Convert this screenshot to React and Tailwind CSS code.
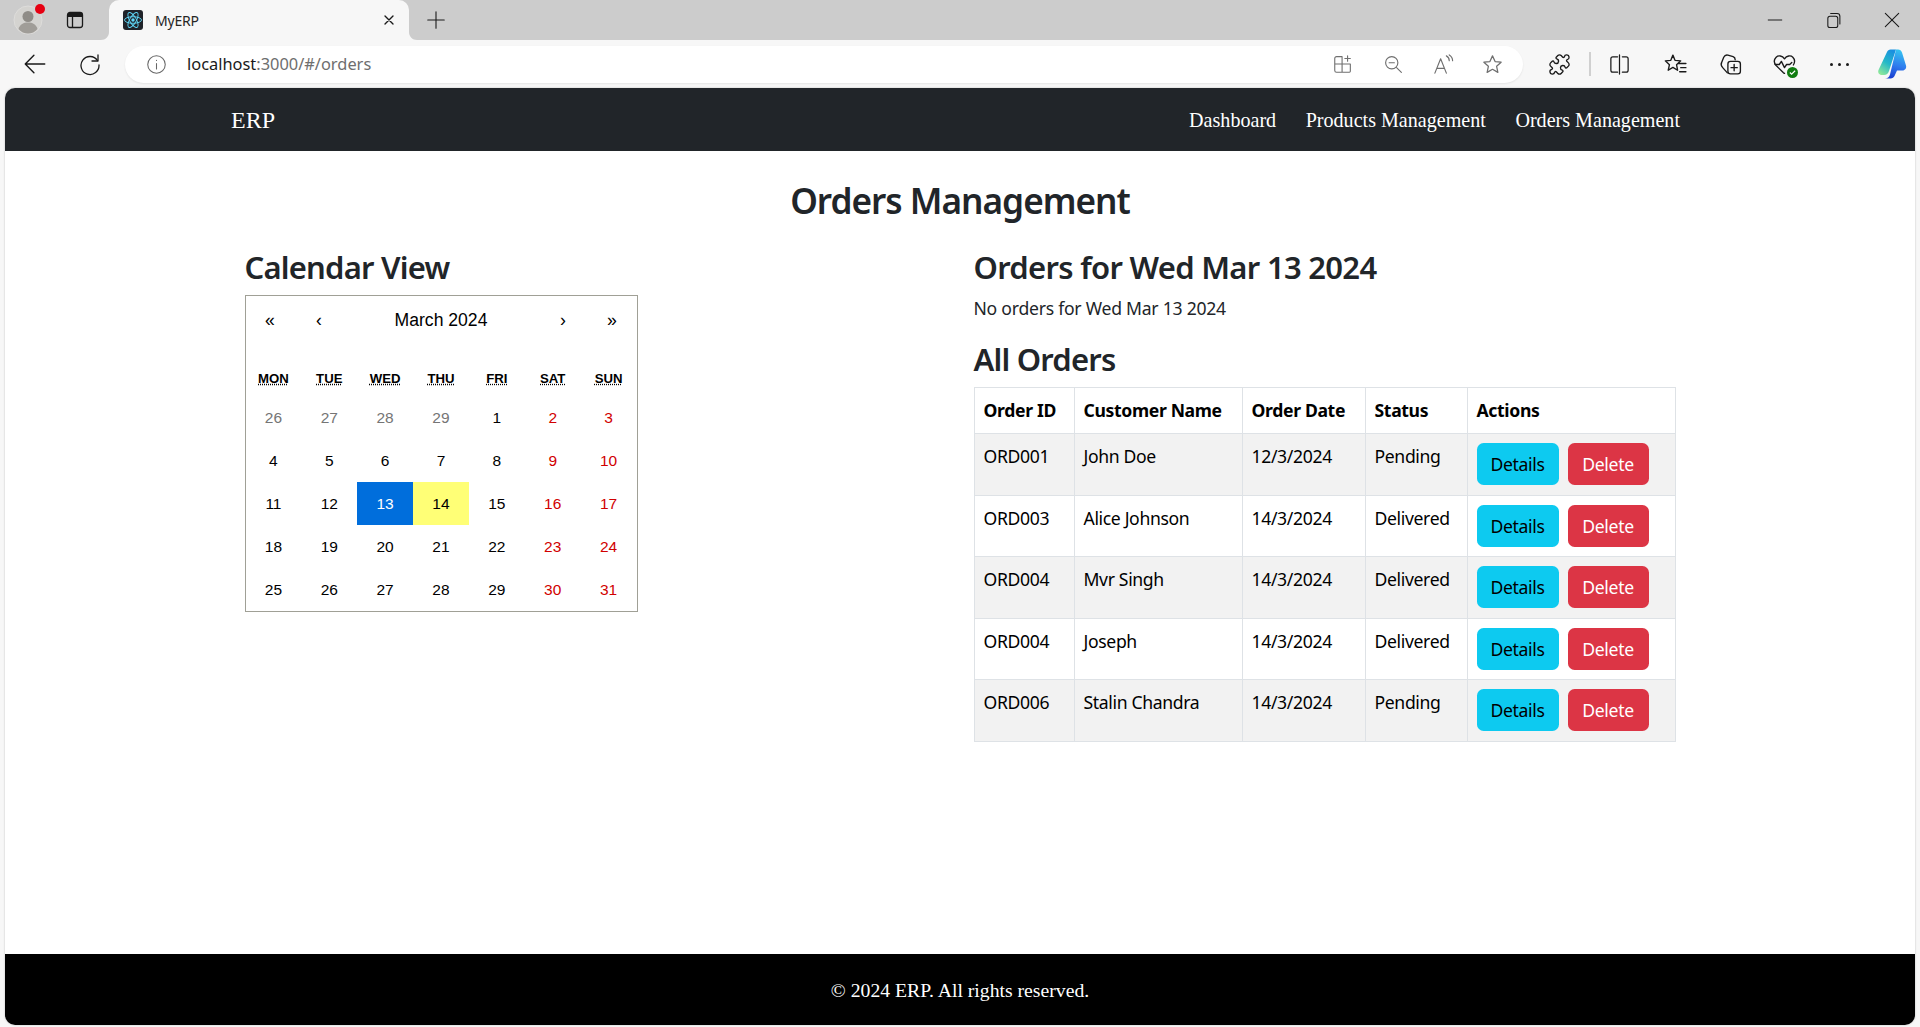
import { useState } from 'react';
import { Puzzle } from 'lucide-react';

const SEGOE = "font-['Noto_Sans',sans-serif]";

const orders = [
  { id: 'ORD001', customer: 'John Doe', date: '12/3/2024', status: 'Pending' },
  { id: 'ORD003', customer: 'Alice Johnson', date: '14/3/2024', status: 'Delivered' },
  { id: 'ORD004', customer: 'Mvr Singh', date: '14/3/2024', status: 'Delivered' },
  { id: 'ORD004', customer: 'Joseph', date: '14/3/2024', status: 'Delivered' },
  { id: 'ORD006', customer: 'Stalin Chandra', date: '14/3/2024', status: 'Pending' },
];

const weekdays = ['MON', 'TUE', 'WED', 'THU', 'FRI', 'SAT', 'SUN'];

// March 2024 grid, starts on the last days of February
const days = [26, 27, 28, 29].map((d) => ({ d, muted: true }));
for (let d = 1; d <= 31; d++) days.push({ d });

function Icon({ children, size = 24, className = '', fill = 'none', stroke = 'currentColor', sw = 1.3 }) {
  return (
    <svg width={size} height={size} viewBox="0 0 24 24" fill={fill} stroke={stroke} strokeWidth={sw} strokeLinecap="round" strokeLinejoin="round" className={className}>
      {children}
    </svg>
  );
}

function Slot({ width, children }) {
  return <div className="flex shrink-0 items-center justify-center" style={{ width }}>{children}</div>;
}

function TabStrip() {
  return (
    <div className="flex h-[40px] shrink-0 items-center bg-[#cccccc]">
      <Slot width={56}>
        <div className="relative">
          <svg width="30" height="30" viewBox="0 0 30 30">
            <circle cx="15" cy="15" r="14" fill="#d4d3d0" stroke="#dedddb" />
            <circle cx="15" cy="11.5" r="5.5" fill="#8f8c87" />
            <path d="M5.5 24c1.5-5 5-6.5 9.5-6.5s8 1.5 9.5 6.5c-2.5 3-6 4.5-9.5 4.5s-7-1.5-9.5-4.5z" fill="#a09d98" />
          </svg>
          <span className="absolute right-[-2px] top-[-1px] h-[10px] w-[10px] rounded-full bg-[#e60012]" />
        </div>
      </Slot>
      <Slot width={38}>
        <svg width="20" height="20" viewBox="0 0 20 20" fill="none">
          <rect x="2.5" y="2.5" width="15" height="15" rx="2.5" stroke="#1a1a1a" strokeWidth="1.3" />
          <path d="M3 3h14v4H3z" fill="#1a1a1a" />
          <path d="M7.5 7v10" stroke="#1a1a1a" strokeWidth="1.3" />
        </svg>
      </Slot>
      <div className="relative ml-[15px] flex h-[40px] w-[300px] shrink-0 items-center rounded-t-[10px] bg-[#f7f7f7] pl-[14px]">
        <svg className="absolute bottom-0 left-[-8px]" width="8" height="8" viewBox="0 0 8 8"><path d="M8 0v8H0c4.5 0 8-3.5 8-8z" fill="#f7f7f7" /></svg>
        <svg className="absolute bottom-0 right-[-8px]" width="8" height="8" viewBox="0 0 8 8"><path d="M0 0v8h8C3.5 8 0 4.500 0 0z" fill="#f7f7f7" /></svg>
        <svg width="20" height="20" viewBox="0 0 20 20" className="shrink-0">
          <rect width="20" height="20" rx="3" fill="#20232a" />
          <g fill="none" stroke="#61dafb" strokeWidth="0.9">
            <ellipse cx="10" cy="10" rx="8.500" ry="3.300" />
            <ellipse cx="10" cy="10" rx="8.500" ry="3.300" transform="rotate(60 10 10)" />
            <ellipse cx="10" cy="10" rx="8.500" ry="3.300" transform="rotate(120 10 10)" />
          </g>
          <circle cx="10" cy="10" r="1.700" fill="#61dafb" />
        </svg>
        <span className={`ml-[12px] text-[14px] tracking-[-0.2px] text-[#262626] ${SEGOE}`}>MyERP</span>
        <Icon size={16} className="absolute right-[12px] text-[#1a1a1a]" sw={2}>
          <path d="M6 6l12 12M18 6L6 18" />
        </Icon>
      </div>
      <div className="ml-[16px] text-[#1a1a1a]">
        <Icon size={22} sw={1.200}><path d="M12 3v18M3 12h18" /></Icon>
      </div>
      <div className="ml-auto flex items-center text-[#1a1a1a]">
        <Slot width={58}><Icon size={18} sw={1.300}><path d="M3 12h18" /></Icon></Slot>
        <Slot width={59}>
          <Icon size={17} sw={1.500}>
            <rect x="4" y="6" width="14" height="16" rx="3" />
            <path d="M8 2h9a4 4 0 0 1 4 4v11" />
          </Icon>
        </Slot>
        <Slot width={57}><Icon size={20} sw={1.300}><path d="M4 4l16 16M20 4L4 20" /></Icon></Slot>
      </div>
    </div>
  );
}

function Toolbar() {
  return (
    <div className="flex h-[48px] shrink-0 items-center bg-[#f7f7f7]">
      <Slot width={69}>
        <Icon size={26} sw={1.300} className="text-[#1a1a1a]"><path d="M21 12H3M11 4l-8 8 8 8" /></Icon>
      </Slot>
      <Slot width={41}>
        <Icon size={24} sw={1.300} className="text-[#1a1a1a]">
          <path d="M19.500 8.500A9 9 0 1 0 21 13" />
          <path d="M20 3v6h-6" />
        </Icon>
      </Slot>
      <div className="ml-[15px] flex h-[37px] w-[1398px] shrink-0 items-center rounded-full bg-white shadow-[0_1px_2px_rgba(0,0,0,0.08)]">
        <Slot width={62}>
          <Icon size={21} sw={1.200} className="text-[#666]">
            <circle cx="12" cy="12" r="10" />
            <path d="M12 11v6M12 7.200v.3" />
          </Icon>
        </Slot>
        <span className={`text-[16.400px] ${SEGOE}`}>
          <span className="text-[#1a1a1a]">localhost</span>
          <span className="text-[#6e6e6e]">:3000/#/orders</span>
        </span>
        <div className="ml-auto flex items-center pr-[7px] text-[#6f6f6f]">
          <Slot width={50}>
            <Icon size={22} sw={1.200}>
              <path d="M11 4H5a2 2 0 0 0-2 2v13a2 2 0 0 0 2 2h14a1 1 0 0 0 1-1v-8H3M11 4v17M17 3v6M14 6h6" />
            </Icon>
          </Slot>
          <Slot width={50}>
            <Icon size={21} sw={1.300}>
              <circle cx="10" cy="10" r="7" />
              <path d="M15.500 15.500L21 21M7 10h6" />
            </Icon>
          </Slot>
          <Slot width={50}>
            <Icon size={23} sw={1.200}>
              <path d="M3 21l6-15 6 15M5 16h8M15 3c2 1 3 3 3 5M18 2c2.500 1.500 3.500 3.500 3.500 6" />
            </Icon>
          </Slot>
          <Slot width={48}>
            <Icon size={23} sw={1.300}>
              <path d="M12 3l2.700 5.900 6.300.7-4.700 4.300 1.300 6.300-5.600-3.200-5.600 3.200 1.300-6.300L3 9.600l6.300-.7z" />
            </Icon>
          </Slot>
        </div>
      </div>
      <div className="ml-[6px] flex items-center text-[#1a1a1a]">
        <Slot width={60}>
          <Puzzle size={23} strokeWidth={1.400} />
        </Slot>
        <div className="h-[24px] w-[2px] bg-[#d0d0d0]" />
        <Slot width={57}>
          <Icon size={23} sw={1.300}>
            <path d="M10 4H5a2 2 0 0 0-2 2v12a2 2 0 0 0 2 2h5M15 4h4a2 2 0 0 1 2 2v12a2 2 0 0 1-2 2h-4M12 2v20" />
          </Icon>
        </Slot>
        <Slot width={55}>
          <Icon size={25} sw={1.300}>
            <path d="M9.500 3l2 5 5.500.5-4 3.700 1 5.300-4.500-2.800L5 17.500l1.200-5.300-4-3.700L7.500 8zM15 11h7M17 15h5M16 19h6" />
          </Icon>
        </Slot>
        <Slot width={54}>
          <Icon size={25} sw={1.300}>
            <rect x="9.500" y="9" width="12" height="12" rx="2.500" />
            <path d="M15.500 12v6M12.500 15h6M9 20L4.500 15c-2-2-2-3-1-5l2-5c1-2 2-2.500 4-2l5 1.500c1.500.5 2 1.500 2 3" />
          </Icon>
        </Slot>
        <Slot width={55}>
          <div className="relative">
            <Icon size={25} sw={1.300}>
              <path d="M12 6.500C10 3.500 6 3 4 5S1.500 10 4 13l7 7 1 .5M12 6.500C14 3.500 18 3 20 5s2 5 .5 7.500" />
              <path d="M3 12h4l2-3 3 6 2-3h3l2-2" />
            </Icon>
            <span className="absolute bottom-[-1px] right-[-1px] flex h-[11px] w-[11px] items-center justify-center rounded-full bg-[#107c10]">
              <svg width="7" height="7" viewBox="0 0 8 8" fill="none" stroke="white" strokeWidth="1.300"><path d="M1 4l2 2 4-4" /></svg>
            </span>
          </div>
        </Slot>
        <Slot width={55}>
          <div className="flex gap-[5px]">
            <span className="h-[3px] w-[3px] rounded-full bg-[#1a1a1a]" />
            <span className="h-[3px] w-[3px] rounded-full bg-[#1a1a1a]" />
            <span className="h-[3px] w-[3px] rounded-full bg-[#1a1a1a]" />
          </div>
        </Slot>
        <Slot width={49}>
          <svg width="30" height="30" viewBox="0 0 30 30">
            <defs>
              <linearGradient id="copA" x1="0.7" y1="0" x2="0.2" y2="1">
                <stop offset="0" stopColor="#1a8fe0" />
                <stop offset="0.5" stopColor="#23b8c8" />
                <stop offset="1" stopColor="#8ee89a" />
              </linearGradient>
              <linearGradient id="copB" x1="0.6" y1="0" x2="0.4" y2="1">
                <stop offset="0" stopColor="#35c4f0" />
                <stop offset="0.55" stopColor="#2f7bee" />
                <stop offset="1" stopColor="#1a3fd0" />
              </linearGradient>
            </defs>
            <path d="M10 3c.5-1.500 2-2.500 3.500-2.500H19L12 22c-.8 2.500-2.500 4-5 4H5C2 26 .5 23.500 1.500 21z" fill="url(#copA)" />
            <path d="M19 .5h2c2 0 3.300 1 4 3l4 13c.8 2.500-1 5-3.500 5H20l-2.500 5.500c-.8 1.500-2 2.500-4 2.500H8c2.500 0 4.300-1.500 5-4z" fill="url(#copB)" />
          </svg>
        </Slot>
      </div>
    </div>
  );
}

function Navbar() {
  return (
    <nav className="flex h-[63px] shrink-0 items-center justify-between rounded-t-[10px] bg-[#212529] pl-[226px] pr-[235px] font-['Liberation_Serif',serif] text-white">
      <a className="text-[24px] leading-[30px]">ERP</a>
      <div className="flex gap-[29.500px] pt-[1px] text-[20.100px]">
        <a>Dashboard</a>
        <a>Products Management</a>
        <a>Orders Management</a>
      </div>
    </nav>
  );
}

function CalendarView() {
  const [selected, setSelected] = useState(13);

  return (
    <div className="w-[393px] border border-[#a0a096] bg-white font-['Liberation_Sans',sans-serif] text-black">
      <div className="mb-[17px] flex h-[49px] items-center text-[17.600px]">
        <button className="h-full w-[49px]">«</button>
        <button className="h-full w-[49px]">‹</button>
        <button className="h-full flex-1">March 2024</button>
        <button className="h-full w-[49px]">›</button>
        <button className="h-full w-[49px]">»</button>
      </div>
      <div className="grid grid-cols-7">
        {weekdays.map((w) => (
          <div key={w} className="flex h-[34px] items-center justify-center text-[13.200px] font-bold">
            <abbr className="underline decoration-dotted">{w}</abbr>
          </div>
        ))}
      </div>
      <div className="grid grid-cols-7 auto-rows-[43px] text-[15.500px]">
        {days.map(({ d, muted }, i) => {
          const isWeekend = i % 7 >= 5;
          let cls = 'text-black';
          if (muted) cls = 'text-[#757575]';
          else if (d === selected) cls = 'bg-[#006edc] text-white';
          else if (d === 14) cls = 'bg-[#ffff76] text-black';
          else if (isWeekend) cls = 'text-[#d10000]';
          return (
            <button key={i} onClick={() => !muted && setSelected(d)} className={`flex items-center justify-center ${cls}`}>
              {d}
            </button>
          );
        })}
      </div>
    </div>
  );
}

function OrdersTable() {
  return (
    <table className="w-[701px] table-fixed border-collapse text-[17.600px] tracking-[-0.35px] text-black">
      <colgroup>
        <col className="w-[100px]" />
        <col className="w-[168px]" />
        <col className="w-[123px]" />
        <col className="w-[102px]" />
        <col className="w-[208px]" />
      </colgroup>
      <thead>
        <tr className="h-[46px]">
          {['Order ID', 'Customer Name', 'Order Date', 'Status', 'Actions'].map((h) => (
            <th key={h} className="border border-[#dee2e6] px-[9px] text-left font-bold">{h}</th>
          ))}
        </tr>
      </thead>
      <tbody>
        {orders.map((o, i) => (
          <tr key={i} className={`h-[61.500px] ${i % 2 === 0 ? 'bg-[#f2f2f2]' : 'bg-white'}`}>
            <td className="border border-[#dee2e6] px-[9px] pt-[9px] align-top">{o.id}</td>
            <td className="border border-[#dee2e6] px-[9px] pt-[9px] align-top">{o.customer}</td>
            <td className="border border-[#dee2e6] px-[9px] pt-[9px] align-top">{o.date}</td>
            <td className="border border-[#dee2e6] px-[9px] pt-[9px] align-top">{o.status}</td>
            <td className="border border-[#dee2e6] px-[9px] align-middle">
              <div className="flex gap-[9px]">
                <button className="h-[42px] w-[82px] rounded-[6.600px] bg-[#0dcaf0] text-black">Details</button>
                <button className="h-[42px] w-[81px] rounded-[6.600px] bg-[#dc3545] text-white">Delete</button>
              </div>
            </td>
          </tr>
        ))}
      </tbody>
    </table>
  );
}

export default function App() {
  return (
    <div className="flex h-screen w-full flex-col overflow-hidden bg-[#f7f7f7]">
      <TabStrip />
      <Toolbar />
      <div className="flex min-h-0 flex-1 flex-col px-[5px] pb-[2px]">
        <div className="flex min-h-0 flex-1 flex-col rounded-[10px] bg-white shadow-[0_0_2px_rgba(0,0,0,0.25)]">
          <Navbar />
          <main className={`mx-auto flex w-[1431px] flex-1 flex-col text-[#212529] ${SEGOE}`}>
            <h1 className="mt-[28px] text-center text-[35.200px] font-semibold leading-[42px] tracking-[-1px]">Orders Management</h1>
            <div className="mt-[25px] grid grid-cols-2 gap-x-[27px]">
              <div>
                <h2 className="mb-[7px] text-[31px] font-semibold leading-[42px] tracking-[-0.8px]">Calendar View</h2>
                <CalendarView />
              </div>
              <div>
                <h2 className="text-[31px] font-semibold leading-[42px] tracking-[-0.7px]">Orders for Wed Mar 13 2024</h2>
                <p className="mt-[7px] text-[17.600px] leading-[26px] tracking-[-0.25px]">No orders for Wed Mar 13 2024</p>
                <h2 className="mt-[17px] text-[31px] font-semibold leading-[42px] tracking-[-0.8px]">All Orders</h2>
                <div className="mt-[7px]">
                  <OrdersTable />
                </div>
              </div>
            </div>
          </main>
          <footer className="flex h-[71px] shrink-0 items-center justify-center rounded-b-[10px] bg-black pt-[3px] font-['Liberation_Serif',serif] text-[19.700px] text-white">
            © 2024 ERP. All rights reserved.
          </footer>
        </div>
      </div>
    </div>
  );
}
